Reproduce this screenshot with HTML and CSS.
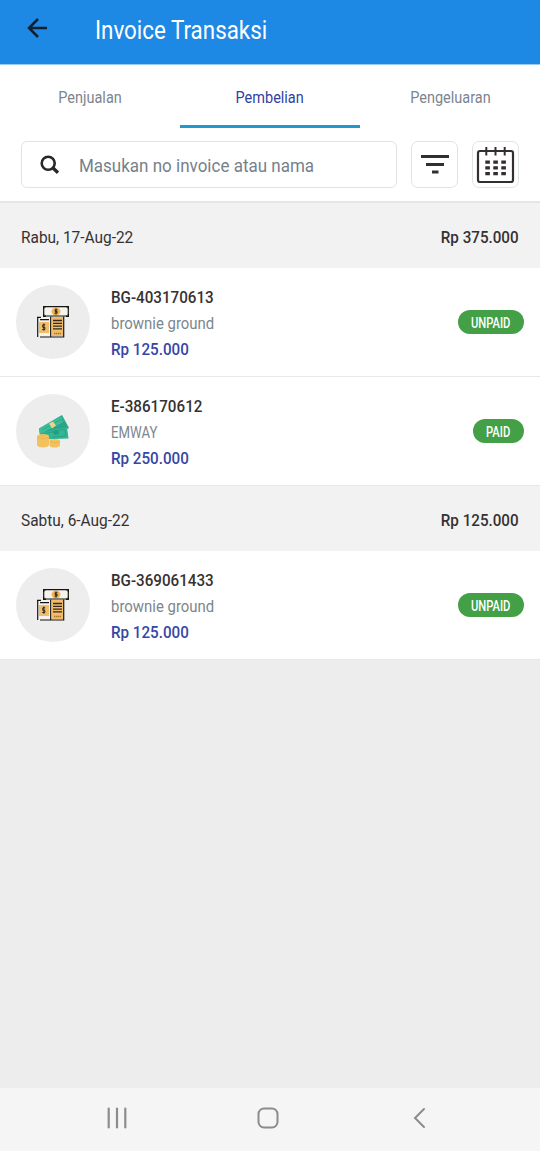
FILE: index.html
```html
<!DOCTYPE html>
<html lang="id">
<head>
<meta charset="utf-8">
<title>Invoice Transaksi</title>
<link rel="stylesheet" href="styles.css">
</head>
<body>
<svg class="symbols" width="0" height="0">
  <symbol id="bill" viewBox="0 0 34 34">
    <path fill="#f6f3ec" d="M8 2h24v9H8zM2 12h13v20H2z"/>
    <path fill="#f0bd6c" d="M3 17h10v11H3zM16 12h11v19H16z"/>
    <ellipse cx="20" cy="6.500" rx="4.500" ry="4" fill="#f0b557"/>
    <path d="M10 1.700H30M7.700 4v5M9 11H31M32.300 4v5" fill="none" stroke="#151515" stroke-width="1.200"/>
    <path d="M7 1h3v1.500H8.500V4H7zM30 1h3v3h-1.500V2.500H30zM7 9h1.500v1.500H10V12H7zM31.500 9H33v3h-3v-1.500h1.500z" fill="#151515"/>
    <path d="M1.700 12v20M4 32H27.700V11.500M14.700 11.500V32M1 12.300h4M4 14.700h9" fill="none" stroke="#151515" stroke-width="1.200"/>
    <path d="M17 15.500h9M17 18.300h9M17 21.100h9M17 23.900h9" stroke="#33291c" stroke-width="1.300"/>
    <path d="M18 28.500h7" stroke="#a9752f" stroke-width="1.300" stroke-dasharray="1.500 .5"/>
    <path d="M21.500 4.800h-2.400v1.600h2v1.700h-2.600M20 3.500v6M9.200 19.800H6.800v2.600h2v2.100H6.200M7.900 18.500v7.200" fill="none" stroke="#2b261e" stroke-width="1"/>
  </symbol>
  <symbol id="cash" viewBox="0 0 34 34">
    <path fill="#2aa587" d="M3 14.500 26 1l7 13-2 1L4 22z"/>
    <path fill="#3dbd9c" d="m3 14.500 22.500-12 3 5L4 20z"/>
    <path fill="#32b693" d="m4 19 27-6 1.500 11.500-26.500 1z"/>
    <path fill="none" stroke="#279b80" stroke-width=".7" d="m6 16 20-11 2 5M7 20l22-5 1 7-14 1"/>
    <ellipse cx="20" cy="18.500" rx="3" ry="2.200" fill="#239e82"/>
    <path fill="#ecd18b" d="m13 9.500 4-2 3 4-4 3z"/>
    <path fill="#f3c25f" d="M1 22.500q0-2.500 6-2.500t6 2.500V31q-1 2.500-6 2.500T1 31zM13.500 27q0-2 5-2t5.500 2v4.500q-1 2-5.500 2t-5-2z"/>
    <path fill="none" stroke="#e0a746" stroke-width=".6" d="M1 23.500q6 3 12 0M14 27.700q5 2 10 0M5 21.800h4"/>
  </symbol>
</svg>
<div class="app">
  <header class="topbar">
    <svg class="back" viewBox="0 0 24 22"><path d="M12 2 3 11l9 9M3 11h18" fill="none" stroke="#10202f" stroke-width="2.500"/></svg>
    <h1 class="title"><span class="fit fit-title">Invoice Transaksi</span></h1>
  </header>
  <nav class="tabs">
    <a class="tab"><span class="fit">Penjualan</span></a>
    <a class="tab active"><span class="fit">Pembelian</span></a>
    <a class="tab"><span class="fit">Pengeluaran</span></a>
  </nav>
  <div class="tools">
    <div class="search">
      <svg class="glass" viewBox="0 0 20 20"><circle cx="8.200" cy="8.200" r="6.500" fill="none" stroke="#272727" stroke-width="2.600"/><path d="m12.500 12.500 5.500 5.300" stroke="#272727" stroke-width="3.300"/></svg>
      <span class="hint fit">Masukan no invoice atau nama</span>
    </div>
    <div class="tool"><svg width="46" height="46" viewBox="0 0 46 46"><path d="M9 14.500h28M14 22.500h18M20 30h6.500" stroke="#332f30" stroke-width="2.800"/></svg></div>
    <div class="tool"><svg width="46" height="46" viewBox="0 0 46 46"><rect x="5" y="9" width="35" height="31" rx="2" fill="none" stroke="#332f30" stroke-width="2.200"/><path d="M13.300 5v8.500M22.500 5v8.500M31.700 5v8.500" stroke="#332f30" stroke-width="2"/><path d="M12.300 20.200h21M12.300 25.900h21M12.300 31.600h21" stroke="#332f30" stroke-width="3.200" stroke-dasharray="4.600 3.400"/></svg></div>
  </div>
  <main class="list">
    <section class="day"><span class="date fit">Rabu, 17-Aug-22</span><span class="sum fit">Rp 375.000</span></section>
    <article class="row">
      <div class="avatar"><svg class="art"><use href="#bill"/></svg></div>
      <div class="info"><span class="code fit">BG-403170613</span><span class="name fit">brownie ground</span><span class="amount fit">Rp 125.000</span></div>
      <span class="badge"><span class="fit">UNPAID</span></span>
    </article>
    <article class="row">
      <div class="avatar"><svg class="art"><use href="#cash"/></svg></div>
      <div class="info"><span class="code fit">E-386170612</span><span class="name caps fit">EMWAY</span><span class="amount fit">Rp 250.000</span></div>
      <span class="badge short"><span class="fit">PAID</span></span>
    </article>
    <section class="day"><span class="date fit">Sabtu, 6-Aug-22</span><span class="sum fit">Rp 125.000</span></section>
    <article class="row last">
      <div class="avatar"><svg class="art"><use href="#bill"/></svg></div>
      <div class="info"><span class="code fit">BG-369061433</span><span class="name fit">brownie ground</span><span class="amount fit">Rp 125.000</span></div>
      <span class="badge"><span class="fit">UNPAID</span></span>
    </article>
  </main>
  <footer class="system">
    <svg viewBox="0 0 540 63" fill="none" stroke="#8c8c8c" stroke-width="2"><path d="M108.700 20.500v19M117 20.500v19M125.300 20.500v19" stroke-linecap="round" stroke-width="2.200"/><rect x="258.500" y="20.500" width="19" height="19" rx="5.500"/><path d="m424 21-9 9 9 9" stroke-linecap="round"/></svg>
  </footer>
</div>
</body>
</html>
```
FILE: styles.css
```css
* { box-sizing: border-box; }
body { margin: 0; background: #ededed; font-family: Roboto, "Noto Sans", sans-serif; font-size: 16px; color: #353132; }
.symbols { display: none; }
.app { width: 540px; height: 1151px; display: flex; flex-direction: column; overflow: hidden; }
.fit { display: inline-block; white-space: nowrap; transform: scaleX(.92); transform-origin: left center; }
.topbar { height: 65px; display: flex; align-items: center; padding: 0 26px 7px; background: #1e88e5; border-bottom: 1px solid #9acbf5; }
.back { width: 24px; height: 22px; margin-bottom: 2px; }
.title { margin: 0 0 0 45px; font-size: 26px; line-height: 30px; font-weight: 400; color: #fff; padding-top: 3px; }
.fit-title { transform: scaleX(.86); }
.tabs { height: 63px; display: grid; grid-template-columns: repeat(3, 1fr); background: #fff; }
.tab { display: flex; align-items: center; justify-content: center; color: #7c858e; padding-top: 4px; border-bottom: 3px solid transparent; }
.tab .fit { transform: scaleX(.905); transform-origin: center; }
.tab.active { color: #303f9f; border-color: #219acb; }
.tools { height: 75px; padding: 13px 21px; display: flex; gap: 14px; background: #fff; border-bottom: 2px solid #e6e6e6; }
.search { width: 376px; display: flex; align-items: center; border: 1px solid #dfe3e6; border-radius: 6px; padding-left: 18px; }
.glass { width: 20px; height: 20px; }
.hint { margin-left: 19px; margin-top: 2px; font-size: 19px; color: #75818b; transform: scaleX(.895); }
.tool { width: 47px; border: 1px solid #dfe3e6; border-radius: 7px; overflow: hidden; }
.tool svg { display: block; }
.day { height: 65px; display: flex; align-items: center; justify-content: space-between; padding: 3px 21px 0; background: #f2f2f2; font-size: 16.500px; }
.date { transform: scaleX(.935); }
.sum { font-weight: 500; transform-origin: right center; }
.row { height: 109px; display: flex; align-items: center; padding: 0 16px; background: #fff; border-bottom: 1px solid #e8e8e8; }
.avatar { width: 74px; height: 74px; flex: none; border-radius: 50%; background: #ededed; display: flex; align-items: center; justify-content: center; }
.art { width: 34px; height: 34px; }
.info { margin-left: 21px; display: flex; flex-direction: column; line-height: 26px; padding-top: 4px; align-items: flex-start; font-size: 16.500px; }
.code, .amount { font-weight: 500; }
.name { color: #7c868e; transform: scaleX(.905); }
.caps { transform: scaleX(.8); }
.amount { color: #3646a4; }
.badge { margin-left: auto; width: 66px; height: 24px; border-radius: 12px; background: #43a047; color: #fff; display: flex; align-items: center; justify-content: center; font-size: 14px; font-weight: 500; padding-top: 1px; }
.badge .fit { transform: scaleX(.8); transform-origin: center; }
.short { width: 51px; }
.system { margin-top: auto; height: 63px; background: #f5f5f5; }
.system svg { display: block; width: 540px; height: 63px; }
```
